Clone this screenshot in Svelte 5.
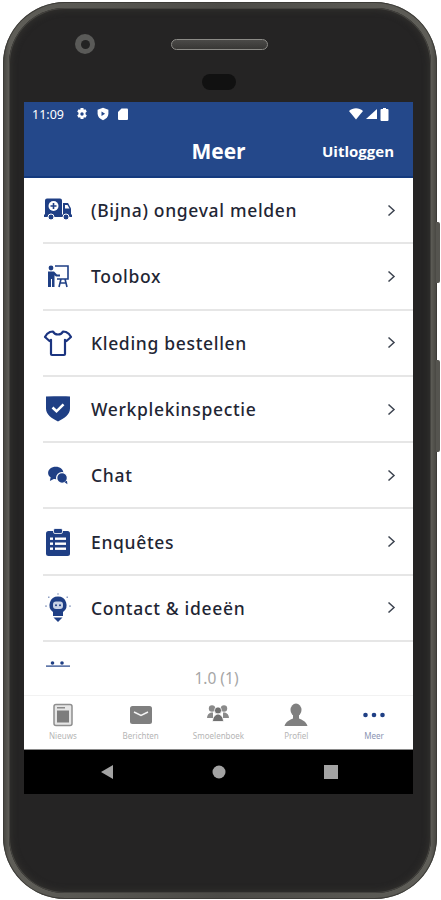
<script>
  const rows = [
    { label: '(Bijna) ongeval melden', icon: 'truck' },
    { label: 'Toolbox', icon: 'toolbox' },
    { label: 'Kleding bestellen', icon: 'shirt' },
    { label: 'Werkplekinspectie', icon: 'shield' },
    { label: 'Chat', icon: 'chat' },
    { label: 'Enquêtes', icon: 'list' },
    { label: 'Contact & ideeën', icon: 'bulb' },
    { label: '', icon: 'cal' }
  ];
  const tabs = [
    { label: 'Nieuws', icon: 'news' },
    { label: 'Berichten', icon: 'mail' },
    { label: 'Smoelenboek', icon: 'people' },
    { label: 'Profiel', icon: 'person' },
    { label: 'Meer', icon: 'dots' }
  ];
</script>

<div class="stage">
  <span class="btn power"></span>
  <span class="btn volume"></span>
  <div class="phone">
    <div class="inner">
      <div class="bezel-top">
        <span class="camera"><i></i></span>
        <span class="speaker"></span>
        <span class="sensor"></span>
      </div>
      <div class="screen">
        <div class="status">
          <span class="time">11:09</span>
          <svg class="si" width="14" height="14" viewBox="0 0 14 14"><path fill="#fff" d="M5.600 1h2.800l.4 1.800 1.600-.6 1.400 2.400-1.300 1.200v1.400l1.300 1.200-1.400 2.400-1.600-.6-.4 1.800H5.600l-.4-1.800-1.600.6-1.400-2.400 1.300-1.200V5.800L2.200 4.600l1.400-2.400 1.600.6z"/><circle cx="7" cy="7" r="1.700" fill="#24488a"/></svg>
          <svg class="si" width="14" height="14" viewBox="0 0 14 14"><path fill="#fff" d="M7 .8l5.400 2v4c0 3-2.300 5.300-5.400 6.400C3.900 12.100 1.600 9.800 1.600 6.800v-4z"/><path fill="#24488a" d="M5.500 4.500l3.600 2.300-3.600 2.300z"/></svg>
          <svg class="si" width="12" height="14" viewBox="0 0 12 14"><path fill="#fff" d="M4.500 1.500H10a1 1 0 0 1 1 1v9.500a1 1 0 0 1-1 1H2a1 1 0 0 1-1-1V5z"/></svg>
          <span class="grow"></span>
          <svg width="14" height="12" viewBox="0 0 14 12"><path fill="#fff" d="M0 3C4-.6 10-.6 14 3L7 11.500z"/></svg>
          <svg width="11" height="12" viewBox="0 0 11 12"><path fill="#fff" d="M11 1v10H0z"/></svg>
          <svg class="batt" width="9" height="13" viewBox="0 0 9 13"><path fill="#fff" d="M3 0h3v1h1.500a1 1 0 0 1 1 1v10a1 1 0 0 1-1 1h-6a1 1 0 0 1-1-1V2a1 1 0 0 1 1-1H3z"/></svg>
        </div>
        <div class="header">
          <span class="title">Meer</span>
          <span class="logout">Uitloggen</span>
        </div>
        <div class="list">
          {#each rows as r}
            <div class="row">
              <span class="ico">
                <svg width="30" height="30" viewBox="0 0 30 30">
                  {#if r.icon === 'truck'}
                    <path fill="#1f3f85" d="M2 5.500a2 2 0 0 1 2-2h13a2 2 0 0 1 2 2V20H2z"/>
                    <path fill="#1f3f85" d="M20 8h5l3 5.500V20h-8z"/>
                    <path fill="#fff" d="M22 10h2.500l2 3.500H22z"/>
                    <circle cx="10.500" cy="11" r="5" fill="#fff"/>
                    <path fill="#1f3f85" d="M9.700 8h1.600v2.200h2.200v1.600h-2.200V14H9.700v-2.200H7.500v-1.600h2.200z"/>
                    <rect x="1" y="19.500" width="28" height="2.500" fill="#1f3f85"/>
                    <circle cx="8" cy="22" r="3" fill="#1f3f85" stroke="#fff"/>
                    <circle cx="23" cy="22" r="3" fill="#1f3f85" stroke="#fff"/>
                  {:else if r.icon === 'toolbox'}
                    <circle cx="8" cy="7" r="2.400" fill="#1f3f85"/>
                    <path fill="#1f3f85" d="M5 10.500h6l3 3h3v2h-4l-1.500-1.200V26H9v-8H8v8H5z"/>
                    <path fill="none" stroke="#1f3f85" stroke-width="1.600" d="M12 5h13v13H14M18 18l-2 8M22 18l2 8M17.500 22h6"/>
                  {:else if r.icon === 'shirt'}
                    <path fill="none" stroke="#1b3480" stroke-width="2.200" stroke-linejoin="round" d="M10 3.500c1 2.200 3 3 5 3s4-.8 5-3l3 .5c2 .8 4 2.500 5 5l-4.500 4-1.500-1.200V26a1 1 0 0 1-1 1H9a1 1 0 0 1-1-1V11.800L6.500 13 2 9c1-2.500 3-4.200 5-5z"/>
                  {:else if r.icon === 'shield'}
                    <path fill="#1f3f85" d="M3 2.500c8 0 16-.5 24 0v12c0 6-6 10-12 13C9 24.500 3 20.500 3 14.500z"/>
                    <path fill="none" stroke="#fff" stroke-width="2.600" d="M9.500 13.500l4 3.800 7-7"/>
                  {:else if r.icon === 'chat'}
                    <g transform="translate(1.500 1.300) scale(.9)">
                      <path fill="#1f3f85" d="M12.500 6c4.800 0 8.500 3 8.500 7s-3.700 7-8.500 7c-.8 0-1.500-.1-2.200-.2L6 22l.8-4.200C5 16.600 4 15 4 13c0-4 3.700-7 8.500-7z"/>
                      <circle cx="19.500" cy="18.500" r="6" fill="#1f3f85" stroke="#fff" stroke-width="1.500"/>
                      <path fill="#1f3f85" d="M22 23l3.500 2.500-.5-4z"/>
                    </g>
                  {:else if r.icon === 'list'}
                    <rect x="3" y="4" width="24" height="25" rx="2.500" fill="#1f3f85"/>
                    <rect x="10.500" y="1.500" width="9" height="5" rx="1.500" fill="#1f3f85" stroke="#fff" stroke-width=".8"/>
                    <g fill="#fff"><rect x="7" y="10.500" width="3" height="2.400"/><rect x="12" y="10.500" width="11" height="2.400"/><rect x="7" y="15.500" width="3" height="2.400"/><rect x="12" y="15.500" width="11" height="2.400"/><rect x="7" y="20.500" width="3" height="2.400"/><rect x="12" y="20.500" width="11" height="2.400"/></g>
                  {:else if r.icon === 'bulb'}
                    <path fill="#1f3f85" d="M15 3.500a8.500 8.500 0 0 1 5 15.400V23H10v-4.100A8.500 8.500 0 0 1 15 3.500z"/>
                    <rect x="10" y="8.500" width="10" height="7.500" rx="3" fill="#c9d3e6"/>
                    <circle cx="13" cy="12.300" r="1" fill="#1f3f85"/><circle cx="17" cy="12.300" r="1" fill="#1f3f85"/>
                    <path fill="#1f3f85" d="M10.500 24.500h9L15 29z"/>
                    <g fill="#8fa0c4"><rect x="14.500" y="0" width="1" height="2"/><rect x="2" y="12.500" width="2" height="1.200"/><rect x="26" y="12.500" width="2" height="1.200"/><rect x="5" y="3.500" width="1.500" height="1.500"/><rect x="23.500" y="3.500" width="1.500" height="1.500"/></g>
                  {:else}
                    <rect x="3" y="5.500" width="24" height="1.200" fill="#1f3f85"/>
                    <circle cx="9.500" cy="3" r="1.800" fill="#1f3f85"/>
                    <circle cx="19" cy="3" r="1.800" fill="#1f3f85"/>
                  {/if}
                </svg>
              </span>
              {#if r.label}
                <span class="label">{r.label}</span>
                <svg class="chev" width="9" height="13" viewBox="0 0 9 13"><path fill="none" stroke="#3d4450" stroke-width="1.500" d="M1.500 1.500l5.500 5-5.500 5"/></svg>
              {/if}
            </div>
          {/each}
        </div>
        <div class="version">1.0 (1)</div>
        <div class="tabs">
          {#each tabs as t}
            <div class="tab" class:active={t.icon === 'dots'}>
              <svg width="26" height="26" viewBox="0 0 26 26">
                {#if t.icon === 'news'}
                  <rect x="4" y="2.500" width="18" height="21" rx="2" fill="#e6e6e6" stroke="#8f8f8f" stroke-width="1.500"/>
                  <rect x="7" y="5" width="8" height="1.500" fill="#8a8a8a"/>
                  <rect x="7" y="8.500" width="12" height="12" fill="#7d7d7d"/>
                {:else if t.icon === 'mail'}
                  <rect x="2" y="4" width="22" height="18" rx="2.500" fill="#7f7f7f"/>
                  <path fill="none" stroke="#f4f4f4" stroke-width="1.500" d="M6 10l7 3.500L20 10"/>
                {:else if t.icon === 'people'}
                  <g fill="#8a8a8a"><circle cx="7" cy="6.500" r="3.200"/><circle cx="19" cy="6.500" r="3.200"/><path d="M2 16c0-3 2-5 4-5.500h2v5.500H2zM24 16c0-3-2-5-4-5.500h-2v5.500h6z"/></g>
                  <circle cx="13" cy="8.500" r="3.600" fill="#707070" stroke="#fff" stroke-width=".8"/>
                  <path fill="#707070" stroke="#fff" stroke-width=".8" d="M7.500 19.500c0-3.500 2.500-7.500 5.500-7.500s5.500 4 5.500 7.500z"/>
                {:else if t.icon === 'person'}
                  <ellipse cx="13" cy="8" rx="5.500" ry="6.500" fill="#808080"/>
                  <path fill="#808080" d="M10 13h6v3.500c3 1.500 7 2.500 8.500 7.500h-23c1.500-5 5.500-6 8.500-7.500z"/>
                {:else}
                  <circle cx="4.500" cy="13" r="2.300" fill="#1f3f85"/><circle cx="13" cy="13" r="2.300" fill="#1f3f85"/><circle cx="21.500" cy="13" r="2.300" fill="#1f3f85"/>
                {/if}
              </svg>
              <span>{t.label}</span>
            </div>
          {/each}
        </div>
        <div class="nav">
          <svg width="14" height="16" viewBox="0 0 14 16"><path fill="#a3a3a3" d="M13 1v14L1 8z"/></svg>
          <svg width="14" height="14" viewBox="0 0 14 14"><circle cx="7" cy="7" r="6.500" fill="#a3a3a3"/></svg>
          <svg width="14" height="14" viewBox="0 0 14 14"><rect width="14" height="14" fill="#a3a3a3"/></svg>
        </div>
      </div>
    </div>
  </div>
</div>

<style>
  :global(body) { margin: 0; background: #fff; }
  .stage { position: relative; width: 441px; height: 900px; overflow: hidden; font-family: "Noto Sans", sans-serif; }
  .btn { position: absolute; left: 436px; width: 4px; background: #55544f; border-radius: 0 2px 2px 0; }
  .power { top: 222px; height: 61px; }
  .volume { top: 360px; height: 92px; }
  .phone {
    box-sizing: border-box; width: 434px; height: 897px; margin: 2px 0 0 3px;
    padding: 6px; border-radius: 62px;
    background: linear-gradient(90deg, #45443f, #5f5e58 1.500%, #4c4b47 50%, #5f5e58 98.500%, #45443f);
    box-shadow: inset 0 0 0 1px #3d3c38;
  }
  .inner {
    box-sizing: border-box; height: 100%; padding: 0 18px 0 15px; border-radius: 56px;
    background: #252424; box-shadow: inset 0 0 0 1px #44433f, inset 0 0 6px 2px #33322f;
  }
  .bezel-top { position: relative; height: 94px; display: flex; flex-direction: column; align-items: center; }
  .camera {
    position: absolute; left: 51px; top: 26px; width: 20px; height: 20px; box-sizing: border-box;
    border-radius: 50%; background: #5a5a58; display: flex; align-items: center; justify-content: center;
  }
  .camera i { width: 9px; height: 9px; border-radius: 50%; background: #232323; }
  .speaker {
    margin-top: 31px; margin-left: 2px; width: 97px; height: 11px; box-sizing: border-box; border-radius: 6px;
    background: linear-gradient(#4b4a48, #383735); border: 1px solid #8b8a86;
  }
  .sensor { margin-top: 24px; width: 34px; height: 16px; border-radius: 8px; background: #111; }
  .screen { height: 692px; display: flex; flex-direction: column; background: #fff; }
  .status {
    height: 24px; flex: none; background: #24488a; color: #fff; display: flex; align-items: center;
    gap: 3px; padding: 0 24px 0 8px; font-size: 12px;
  }
  .time { width: 34px; margin-right: 6px; font-size: 12.500px; }
  .si { margin-right: 4px; }
  .grow { flex: 1; }
  .header {
    height: 52px; flex: none; box-sizing: border-box; background: #24488a; border-bottom: 2px solid #143a7e;
    color: #fff; font-weight: 700; position: relative; display: flex; align-items: center; justify-content: center;
    padding-bottom: 1px;
  }
  .title { font-size: 21px; font-family: "Open Sans", sans-serif; }
  .logout { position: absolute; right: 19px; top: 15px; font-size: 15px; font-family: "Open Sans", sans-serif; }
  .list { height: 489px; flex: none; overflow: hidden; }
  .row {
    height: 66.300px; box-sizing: border-box; margin-left: 19px; border-bottom: 2px solid #e6e6e6;
    display: flex; align-items: center; padding-right: 17px;
  }
  .row:last-child { border-bottom: 0; align-items: flex-start; padding-top: 17.800px; }
  .ico { width: 48px; flex: none; display: flex; }
  .label { flex: 1; font-size: 17.500px; letter-spacing: .68px; color: #1f2634; font-weight: 500; }
  .version { height: 28px; flex: none; box-sizing: border-box; padding: 0 4px 6px 0; display: flex; align-items: center; justify-content: center; font-size: 15.500px; color: #a6a6a6; }
  .tabs { height: 54px; flex: none; display: flex; border-top: 1px solid #f2f2f2; box-sizing: border-box; }
  .tab { flex: 1; display: flex; flex-direction: column; align-items: center; padding-top: 6px; font-size: 8px; color: #b5b5b5; gap: 2px; }
  .tab.active { color: #8a94b2; }
  .nav {
    height: 45px; flex: none; background: #000; display: flex; align-items: center; justify-content: space-between;
    padding: 0 75px 0 76px; border-top: 1px solid #8a8a8a; box-sizing: border-box;
  }
</style>
